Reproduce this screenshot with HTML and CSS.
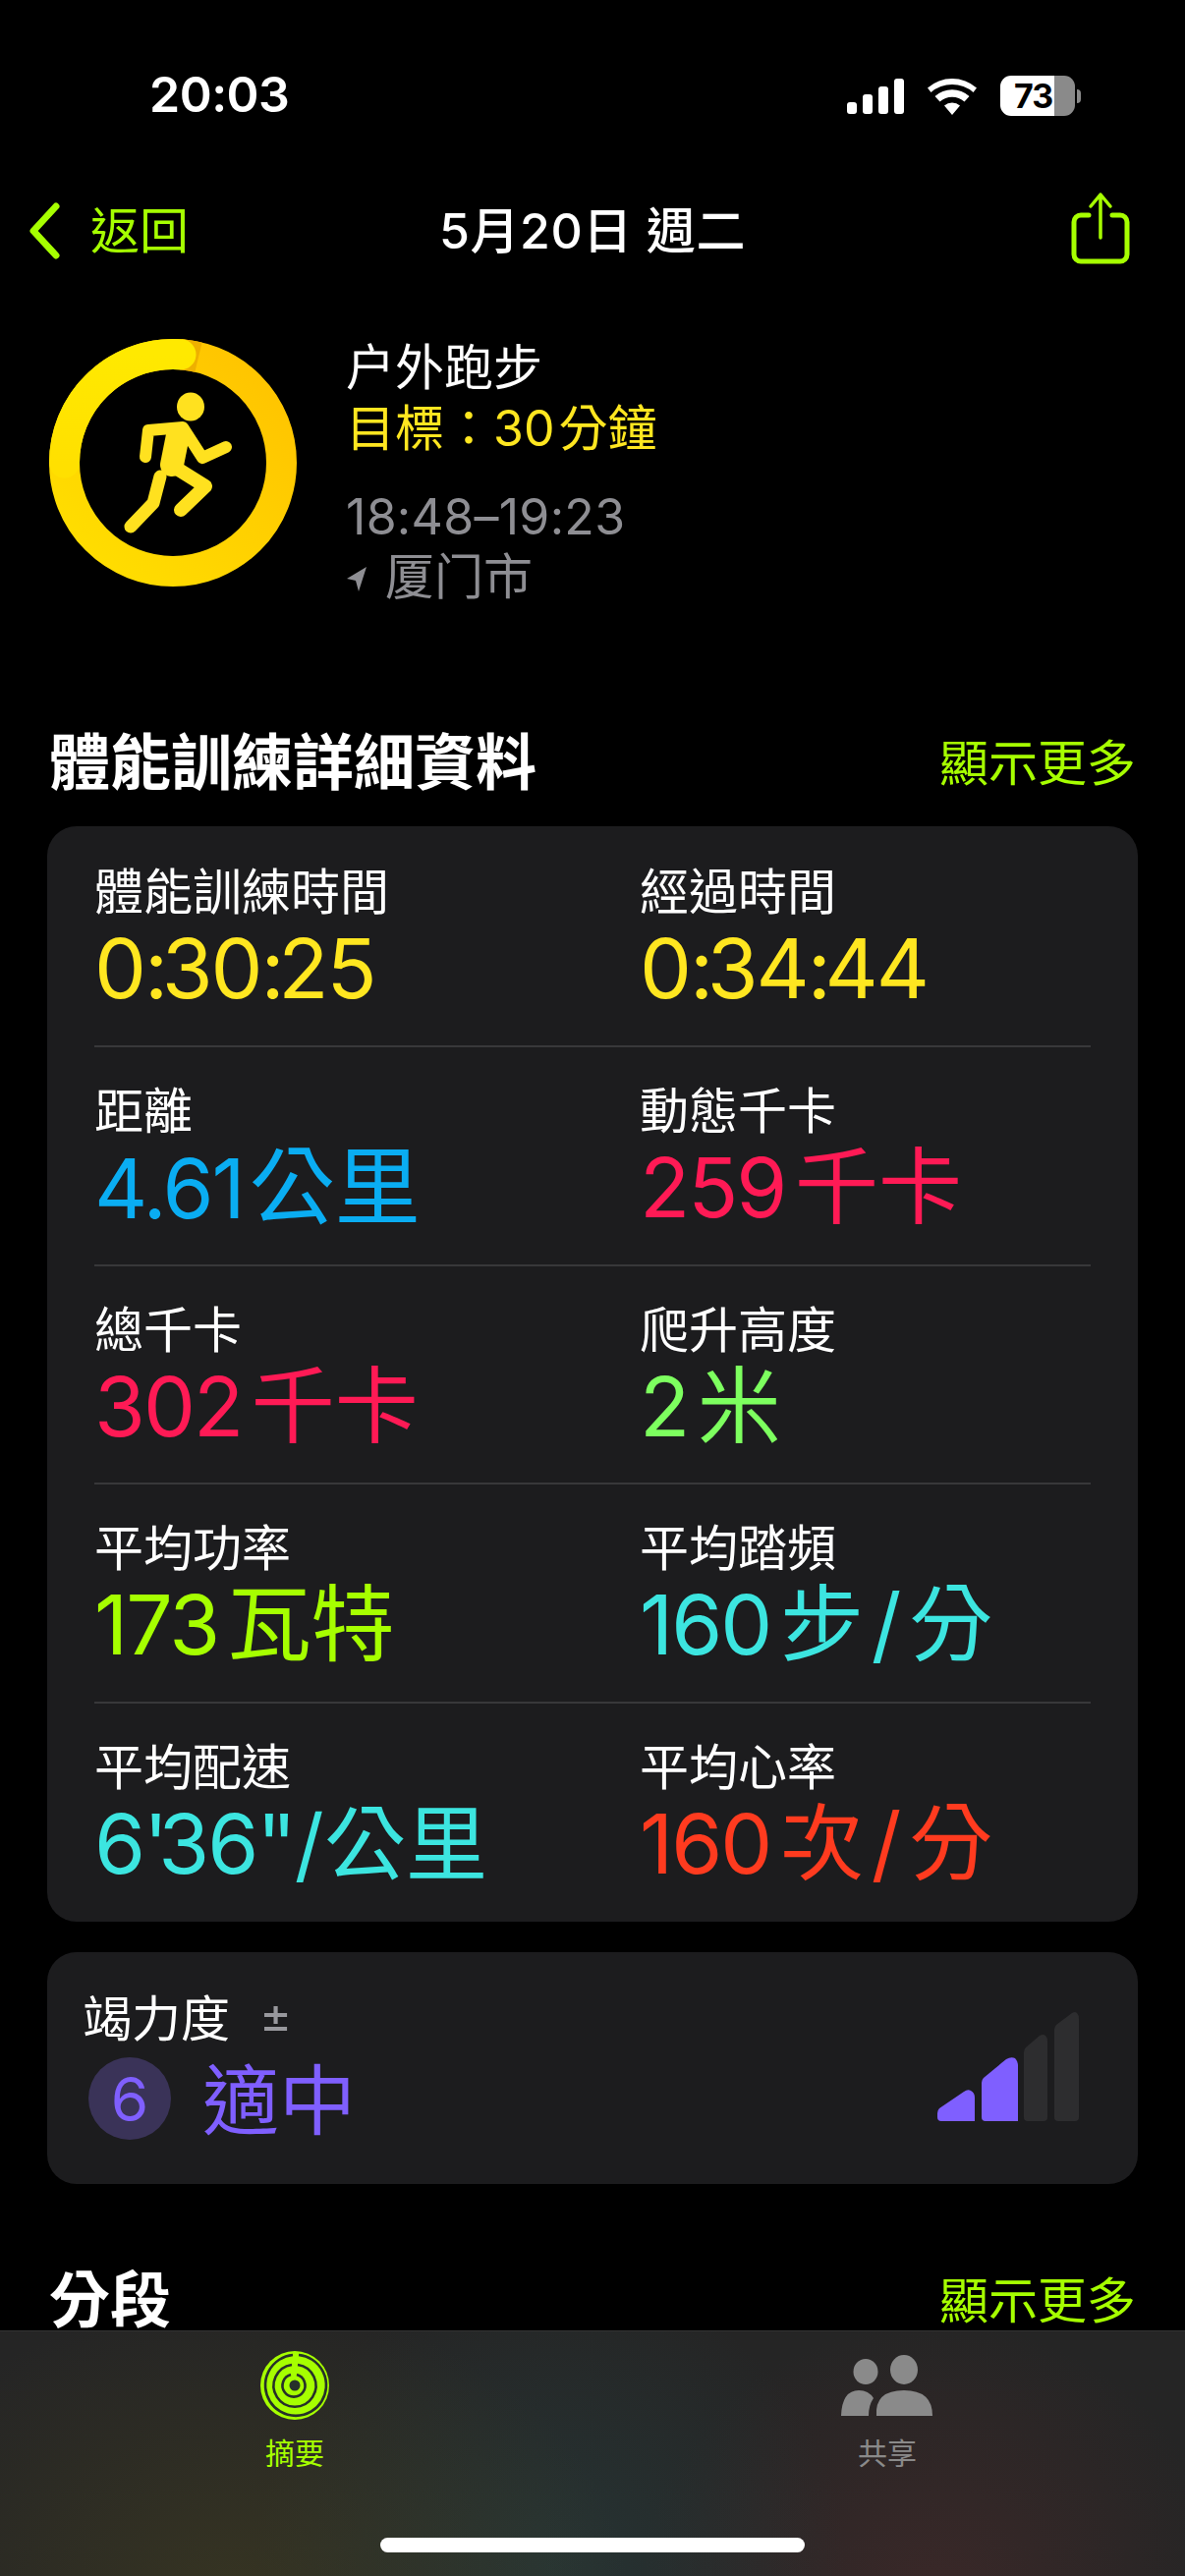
FILE: index.html
```html
<!DOCTYPE html>
<html lang="zh-Hant">
<head>
<meta charset="utf-8">
<title>體能訓練詳細資料</title>
<link rel="stylesheet" href="styles.css">
</head>
<body>
<div class="screen">
  <header class="status">
    <span class="clock">20:03</span>
    <div class="status-icons">
      <svg class="signal" width="58" height="36" viewBox="0 0 58 36"><rect x="0" y="24" width="10" height="12" rx="3"/><rect x="16" y="16" width="10" height="20" rx="3"/><rect x="32" y="8" width="10" height="28" rx="3"/><rect x="48" y="0" width="10" height="36" rx="3"/></svg>
      <svg class="wifi" width="50" height="38" viewBox="0 0 50 38"><path d="M25 38l-8-9.500a12 12 0 0 1 16 0zM12.500 24.500l-5-5.500a26 26 0 0 1 35 0l-5 5.500a19 19 0 0 0-25 0zM3.500 15L0 10.500a38 38 0 0 1 50 0L46.500 15a33 33 0 0 0-43 0z"/></svg>
      <div class="battery"><div class="battery-body"><span class="battery-num">73</span></div><span class="battery-nub"></span></div>
    </div>
  </header>

  <nav class="navbar">
    <div class="back">
      <svg width="34" height="58" viewBox="0 0 34 58"><path d="M29 4L6 29l23 25" fill="none" stroke="#a6ff00" stroke-width="7" stroke-linecap="round" stroke-linejoin="round"/></svg>
      <span>返回</span>
    </div>
    <div class="nav-title">5月20日 週二</div>
    <svg class="share" width="60" height="74" viewBox="0 0 60 74"><path d="M18 24H10a7 7 0 0 0-7 7v33a7 7 0 0 0 7 7h40a7 7 0 0 0 7-7V31a7 7 0 0 0-7-7h-8" fill="none" stroke="#a6ff00" stroke-width="5" stroke-linecap="round"/><path d="M30 47V3M20 15L30 3l10 12" fill="none" stroke="#a6ff00" stroke-width="3.500" stroke-linecap="round" stroke-linejoin="round"/></svg>
  </nav>

  <section class="workout">
    <svg class="ring" width="252" height="252" viewBox="0 0 252 252">
      <defs>
        <linearGradient id="ringGrad" x1="1" y1="0" x2="0" y2="1"><stop offset="0" stop-color="#ffc200"/><stop offset="1" stop-color="#ffe000"/></linearGradient>
        <linearGradient id="ringTop" x1="0" y1="0" x2="0" y2="1"><stop offset="0" stop-color="#ffe900"/><stop offset="1" stop-color="#ffe000"/></linearGradient>
      </defs>
      <circle cx="126" cy="126" r="110.500" fill="none" stroke="url(#ringGrad)" stroke-width="31"/>
      <path d="M134 15.800A110.500 110.500 0 0 1 152 18.600" fill="none" stroke="#eeb000" stroke-width="31"/>
      <path d="M15.500 126A110.500 110.500 0 0 1 134 15.800" fill="none" stroke="url(#ringTop)" stroke-width="31" stroke-linecap="round"/>
      <g fill="none" stroke="#ffe11f" stroke-linecap="round" stroke-linejoin="round">
        <path d="M98 120l3-27 35-3 20 31 24-11" stroke-width="12"/>
        <path d="M134 94l-7 36 32 20-25 24" stroke-width="14"/>
        <path d="M131 98l-6 30" stroke-width="24"/>
        <path d="M113 140l-7 27-23 24" stroke-width="13"/>
      </g>
      <ellipse cx="144" cy="69" rx="14" ry="14.500" fill="#ffe11f"/>
    </svg>
    <div class="workout-text">
      <div class="wt-name">户外跑步</div>
      <div class="wt-goal">目標：30 分鐘</div>
      <div class="wt-time">18:48–19:23</div>
      <div class="wt-place">
        <svg width="22" height="28" viewBox="0 0 22 28"><path d="M21 2L1 14l9 2 3 11z" fill="#8e8e93"/></svg>
        <span>厦门市</span>
      </div>
    </div>
  </section>

  <div class="section-head head-details">
    <h2>體能訓練詳細資料</h2>
    <a class="more">顯示更多</a>
  </div>

  <section class="card details">
    <div class="row">
      <div class="cell"><div class="label">體能訓練時間</div><div class="value yellow">0<span class="tight">:</span>30<span class="tight">:</span>25</div></div>
      <div class="cell"><div class="label">經過時間</div><div class="value yellow">0<span class="tight">:</span>34<span class="tight">:</span>44</div></div>
    </div>
    <div class="row">
      <div class="cell"><div class="label">距離</div><div class="value blue">4.61<span class="unit unit-wide">公里</span></div></div>
      <div class="cell"><div class="label">動態千卡</div><div class="value pink">259 <span class="unit">千卡</span></div></div>
    </div>
    <div class="row">
      <div class="cell"><div class="label">總千卡</div><div class="value pink">302 <span class="unit">千卡</span></div></div>
      <div class="cell"><div class="label">爬升高度</div><div class="value green">2 <span class="unit">米</span></div></div>
    </div>
    <div class="row">
      <div class="cell"><div class="label">平均功率</div><div class="value lime">173 <span class="unit">瓦特</span></div></div>
      <div class="cell"><div class="label">平均踏頻</div><div class="value cyan">160 <span class="unit">步 / 分</span></div></div>
    </div>
    <div class="row">
      <div class="cell"><div class="label">平均配速</div><div class="value cyan">6<span class="tight-quote">'</span>36<span class="tight-quote">'</span>'<span class="unit unit-pace">/ 公里</span></div></div>
      <div class="cell"><div class="label">平均心率</div><div class="value red">160 <span class="unit">次 / 分</span></div></div>
    </div>
  </section>

  <section class="card effort">
    <div class="effort-main">
      <div class="effort-label"><span>竭力度</span><span class="plusminus">±</span></div>
      <div class="effort-level"><span class="effort-badge">6</span><span class="effort-word">適中</span></div>
    </div>
    <svg class="effort-bars" width="146" height="112" viewBox="0 0 146 112">
      <path d="M4 111q-4 0-4-4v-4q0-3 2-5L27 81q4-3 7-1q4 2 4 7v24z" fill="#7f5fff"/>
      <path d="M49 111q-4 0-4-4V72q0-3 2-5l23-19q5-3 9-1q3 3 3 8v56z" fill="#7f5fff"/>
      <path d="M92 111q-4 0-4-4V41q0-3 2-5l14-12q4-2 6 0q2 2 2 6v77q0 4-4 4z" fill="#2d2d2f"/>
      <path d="M123 111q-4 0-4-4V18q0-3 2-5l16-12q3-2 5 0q2 2 2 6v100q0 4-4 4z" fill="#2d2d2f"/>
    </svg>
  </section>

  <div class="section-head head-splits">
    <h2>分段</h2>
    <a class="more">顯示更多</a>
  </div>

  <footer class="tabbar">
    <div class="tab tab-active">
      <svg width="70" height="70" viewBox="0 0 70 70">
        <circle cx="35" cy="35" r="35" fill="#a6ff00"/>
        <g fill="none" stroke="#26302a" stroke-width="2.600">
          <path d="M39 4a31 31 0 1 1-6 0"/>
          <path d="M38 14a21.500 21.500 0 1 1-6 0"/>
          <path d="M37 24a11.500 11.500 0 1 1-6 0"/>
        </g>
        <circle cx="35" cy="35" r="5.500" fill="#26302a"/>
      </svg>
      <span>摘要</span>
    </div>
    <div class="tab tab-share">
      <svg width="94" height="62" viewBox="0 0 94 62">
        <ellipse cx="25" cy="17" rx="12.500" ry="13" fill="#8a8a8a"/>
        <ellipse cx="64" cy="15" rx="14" ry="15" fill="#8a8a8a"/>
        <path d="M0 62q1-26 18-26q10 0 15 8q-5 7-5 18z" fill="#8a8a8a"/>
        <path d="M36 62q-2-26 28-26q29 0 29 26z" fill="#8a8a8a"/>
      </svg>
      <span>共享</span>
    </div>
    <div class="home-indicator"></div>
  </footer>
</div>
</body>
</html>
```
FILE: styles.css
```css
* { box-sizing: border-box; margin: 0; padding: 0; }
html, body { background: #000; }
body { width: 1206px; height: 2622px; overflow: hidden; font-family: Inter, "Noto Sans CJK TC", sans-serif; color: #fff; }
.screen { position: relative; width: 1206px; height: 2622px; overflow: hidden; background: #000; }

.status { height: 195px; padding: 69px 106px 0 152px; display: flex; justify-content: space-between; align-items: flex-start; }
.clock { font-size: 50px; line-height: 54px; font-weight: 600; letter-spacing: -0.5px; }
.status-icons { display: flex; align-items: center; gap: 24px; padding-top: 8px; }
.signal, .wifi { fill: #fff; display: block; }
.battery { display: flex; align-items: center; gap: 2px; }
.battery-body { width: 76px; height: 41px; border-radius: 11px; background: linear-gradient(to right, #fff 0 72%, #8a8a8a 72% 100%); display: flex; align-items: center; padding-left: 14px; }
.battery-num { color: #000; font-size: 34px; line-height: 41px; font-weight: 700; letter-spacing: -1px; }
.battery-nub { width: 4px; height: 14px; border-radius: 0 4px 4px 0; background: #8a8a8a; }

.navbar { height: 80px; padding: 0 56px 0 28px; display: flex; align-items: center; justify-content: space-between; position: relative; }
.back { display: flex; align-items: center; gap: 30px; color: #a6ff00; font-size: 50px; }
.back span { line-height: 60px; }
.nav-title { position: absolute; left: 0; right: 0; text-align: center; font-size: 50px; font-weight: 500; line-height: 60px; letter-spacing: 0.6px; }
.share { display: block; margin-top: -6px; }

.workout { margin-top: 70px; padding-left: 50px; display: flex; gap: 50px; height: 252px; }
.ring { display: block; flex: none; }
.wt-name { font-size: 50px; line-height: 62px; margin-top: -2px; }
.wt-goal { font-size: 50px; line-height: 62px; color: #ffe620; word-spacing: -10px; }
.wt-time { font-size: 50px; line-height: 62px; color: #8e8e93; margin-top: 28px; letter-spacing: 0.3px; }
.wt-place { font-size: 50px; line-height: 60px; color: #8e8e93; display: flex; align-items: center; gap: 18px; }
.wt-place svg { display: block; margin-top: 4px; }

.section-head { display: flex; justify-content: space-between; align-items: center; padding: 0 50px; }
.section-head h2 { font-size: 62px; line-height: 72px; font-weight: 700; }
.more { color: #a6ff00; font-size: 50px; line-height: 72px; }
.head-details { margin-top: 144px; height: 72px; }
.head-splits { margin-top: 83px; height: 72px; }

.card { background: #1c1c1e; border-radius: 30px; margin: 0 48px; }
.details { margin-top: 28px; padding: 0 48px; height: 1115px; }
.row { height: 222.800px; display: grid; grid-template-columns: 555px 1fr; border-top: 2px solid #38383a; padding-top: 35px; }
.row:first-child { border-top: none; padding-top: 37px; }
.label { font-size: 50px; line-height: 60px; }
.value { font-size: 84px; line-height: 100px; margin-top: -2px; white-space: nowrap; letter-spacing: -2px; word-spacing: -12px; }
.unit { font-size: 85px; letter-spacing: 0; word-spacing: -16px; }
.unit-wide { font-size: 87px; margin-left: 6px; }
.unit-pace { font-size: 83px; word-spacing: -23px; }
.tight { letter-spacing: -6.500px; }
.tight-quote { letter-spacing: -10px; }
.yellow { color: #ffe620; }
.blue { color: #0aadf2; }
.pink { color: #ff1a55; }
.green { color: #7dff5f; }
.lime { color: #a6ff00; }
.cyan { color: #3ce5e0; }
.red { color: #ff3b1f; }

.effort { margin-top: 31px; height: 236px; padding: 38px 58px 0 36px; display: flex; justify-content: space-between; }
.effort-label { font-size: 50px; line-height: 60px; display: flex; gap: 30px; }
.plusminus { color: #98989d; font-size: 50px; line-height: 52px; }
.effort-level { display: flex; align-items: center; gap: 32px; margin-top: 9px; padding-left: 6px; }
.effort-badge { width: 84px; height: 84px; border-radius: 50%; background: #3a3358; color: #7f5fff; font-size: 62px; display: flex; align-items: center; justify-content: center; }
.effort-word { color: #7f5fff; font-size: 78px; line-height: 84px; position: relative; top: 3px; }
.effort-bars { display: block; margin-top: 23px; }

.tabbar { position: absolute; left: 0; right: 0; bottom: 0; height: 250px; border-top: 1px solid #333; background:
  radial-gradient(ellipse 400px 300px at 240px 270px, rgba(80,75,30,.4), transparent),
  radial-gradient(ellipse 300px 300px at 560px 240px, rgba(40,70,70,.45), transparent),
  radial-gradient(ellipse 300px 280px at 950px 270px, rgba(90,45,45,.4), transparent),
  #252525; display: flex; padding: 20px 0 0 120px; }
.tab { width: 360px; display: flex; flex-direction: column; align-items: center; color: #8a8a8a; font-size: 30px; }
.tab-share { margin-left: 243px; padding-top: 4px; }
.tab svg { display: block; }
.tab span { line-height: 40px; margin-top: 14px; }
.tab-active { color: #a6ff00; }
.tab-share span { margin-top: 18px; }
.home-indicator { position: absolute; left: 387px; bottom: 24px; width: 432px; height: 15px; border-radius: 8px; background: #fff; }
```
